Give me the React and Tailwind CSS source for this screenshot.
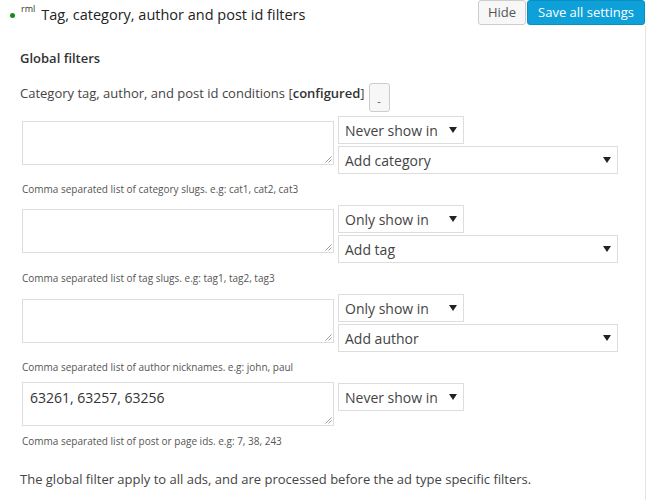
import React from 'react';

const font = { fontFamily: '"Open Sans", "Noto Sans", sans-serif' };

const Caret = () => (
  <svg width="8" height="6" viewBox="0 0 8 6" className="shrink-0">
    <path d="M0 0 H8 L4 6 Z" fill="#222" />
  </svg>
);

const Select = ({ label, wide }) => (
  <div
    className={`flex items-center justify-between h-[28px] border border-[#dddddd] bg-white pl-[6px] pr-[6px] text-[14px] text-[#444] ${
      wide ? 'w-[280px]' : 'w-[126px]'
    }`}
  >
    <span>{label}</span>
    <Caret />
  </div>
);

const Grip = () => (
  <svg width="7" height="7" viewBox="0 0 7 7" className="absolute right-[1px] bottom-[1px]">
    <path d="M6.5 0.5 L0.5 6.5 M6.5 3.5 L3.5 6.5" stroke="#888" strokeWidth="0.8" />
  </svg>
);

const FilterRow = ({ mode, add, value, help, offset }) => (
  <div>
    <div className="flex items-start gap-[4px]">
      <div
        className={`relative w-[312px] h-[44px] border border-[#dddddd] bg-white px-[7px] pt-[4px] text-[14px] text-[#333] ${offset}`}
      >
        {value}
        <Grip />
      </div>
      <div className="flex flex-col gap-[2px]">
        <Select label={mode} />
        {add && <Select label={add} wide />}
      </div>
    </div>
    <p className="mt-[8px] text-[10px] leading-[14px] text-[#555]">{help}</p>
  </div>
);

export default function App() {
  return (
    <div className="w-[647px] h-[500px] bg-white overflow-hidden" style={font}>
      <div className="flex items-start justify-between">
        <div className="flex items-center pl-[10px] pt-[4px]">
          <span className="w-[5px] h-[5px] rounded-full bg-[#1a8a1a] mt-[2px]" />
          <sup className="ml-[6px] text-[9px] text-[#333] -mt-[3px]">rml</sup>
          <h2 className="ml-[6px] text-[14.5px] text-[#222]">Tag, category, author and post id filters</h2>
        </div>
        <div className="flex pr-[2px]">
          <button className="h-[25px] px-[9px] border border-[#cccccc] rounded-[3px] bg-[#f7f7f7] text-[13px] text-[#555]">
            Hide
          </button>
          <button className="ml-[1px] h-[25px] px-[10px] border border-[#0a8fc4] rounded-[3px] bg-[#0ea0d8] text-[13px] text-white">
            Save all settings
          </button>
        </div>
      </div>

      <div className="mr-[1px] border-r border-[#e5e5e5] pl-[20px] pt-[23px] pb-[20px]">
        <h3 className="text-[13px] font-semibold text-[#333]">Global filters</h3>

        <div className="mt-[15px] flex items-start text-[13px] text-[#444]">
          <span className="mt-[1px]">
            Category tag, author, and post id conditions [<b className="font-semibold text-[#333]">configured</b>]
          </span>
          <button className="ml-[4px] w-[21px] h-[29px] border border-[#cccccc] rounded-[3px] bg-[#f7f7f7] text-[11px] text-[#555] leading-none pt-[6px]">
            -
          </button>
        </div>

        <div className="mt-[4px] ml-[2px] flex flex-col gap-[9px]">
          <FilterRow
            mode="Never show in"
            add="Add category"
            offset="mt-[5px]"
            help="Comma separated list of category slugs. e.g: cat1, cat2, cat3"
          />
          <FilterRow
            mode="Only show in"
            add="Add tag"
            offset="mt-[4px]"
            help="Comma separated list of tag slugs. e.g: tag1, tag2, tag3"
          />
          <FilterRow
            mode="Only show in"
            add="Add author"
            offset="mt-[5px]"
            help="Comma separated list of author nicknames. e.g: john, paul"
          />
          <FilterRow
            mode="Never show in"
            value="63261, 63257, 63256"
            offset="-mt-[1px]"
            help="Comma separated list of post or page ids. e.g: 7, 38, 243"
          />
        </div>

        <p className="mt-[22px] text-[13px] text-[#444]">
          The global filter apply to all ads, and are processed before the ad type specific filters.
        </p>
      </div>
    </div>
  );
}
